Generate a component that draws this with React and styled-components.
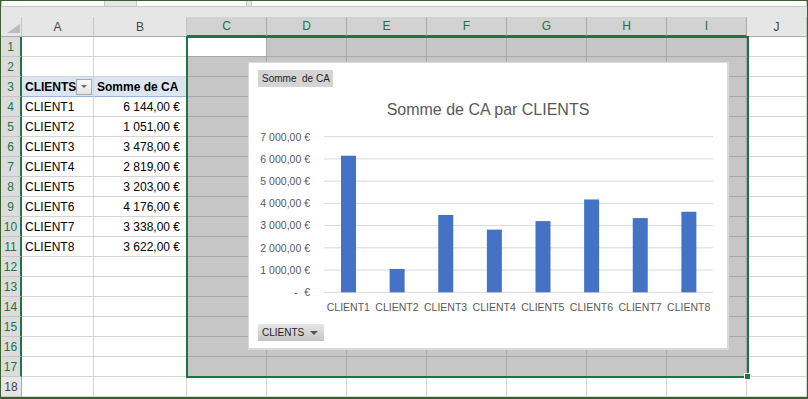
import React from 'react';
import styled, { createGlobalStyle, css } from 'styled-components';

const GREEN = '#217346';

const GlobalStyle = createGlobalStyle`
  html, body { margin: 0; padding: 0; background: #fff; overflow: hidden; }
  body { font-family: "Liberation Sans", Arial, sans-serif; }
`;

const Window = styled.div`
  width: 808px;
  height: 399px;
  box-sizing: border-box;
  border: 1px solid #3d5e2f;
  border-bottom-width: 2px;
  display: flex;
  flex-direction: column;
  overflow: hidden;
  background: #fff;
`;

const FormulaStrip = styled.div`
  display: flex;
  flex-shrink: 0;
  height: 6px;
  box-sizing: border-box;
  border-bottom: 1px solid #c6c6c6;
  background: #e6e6e6;
`;

const FormulaBox = styled.div`
  background: #fff;
  border-right: 1px solid #c6c6c6;
  border-left: 1px solid #c6c6c6;
  ${p => (p.$w ? css`width: ${p.$w}px;` : css`flex: 1;`)}
`;

const FormulaGap = styled.div`
  width: ${p => p.$w}px;
`;

const Band = styled.div`
  flex-shrink: 0;
  height: 10px;
  background: #e6e6e6;
`;

const Sheet = styled.div`
  position: relative;
  display: grid;
  grid-template-columns: 21px 72px 93px repeat(7, 80px) 1fr;
  grid-template-rows: repeat(19, 20px);
  font-size: 12px;
  color: #000;
`;

const Corner = styled.div`
  background: #e6e6e6;
  border-right: 1px solid #c6c6c6;
  border-bottom: 1px solid #ababab;
  box-sizing: border-box;
  display: flex;
  align-items: flex-end;
  justify-content: flex-end;
  padding: 0 1px 3px 0;
`;

const CornerTriangle = styled.div`
  width: 0;
  height: 0;
  border-left: 13px solid transparent;
  border-bottom: 9px solid #bcbcbc;
`;

const ColHead = styled.div`
  box-sizing: border-box;
  display: flex;
  align-items: center;
  justify-content: center;
  font-size: 12px;
  background: ${p => (p.$sel ? '#d2d2d2' : '#e6e6e6')};
  color: ${p => (p.$sel ? GREEN : '#444')};
  border-right: 1px solid ${p => (p.$sel ? '#ababab' : '#c6c6c6')};
  border-bottom: ${p => (p.$sel ? `2px solid ${GREEN}` : '1px solid #ababab')};
`;

const RowHead = styled.div`
  box-sizing: border-box;
  display: flex;
  align-items: center;
  justify-content: center;
  font-size: 12px;
  background: ${p => (p.$sel ? '#dcdcdc' : '#e6e6e6')};
  color: ${p => (p.$sel ? GREEN : '#444')};
  border-bottom: 1px solid #c6c6c6;
  border-right: ${p => (p.$sel ? `2px solid ${GREEN}` : '1px solid #ababab')};
`;

const Cell = styled.div`
  box-sizing: border-box;
  display: flex;
  align-items: center;
  justify-content: ${p => (p.$right ? 'flex-end' : 'flex-start')};
  padding: 0 ${p => (p.$right ? '6px' : '3px')} 0 3px;
  white-space: nowrap;
  overflow: hidden;
  background: #fff;
  border-right: 1px solid #d4d4d4;
  border-bottom: 1px solid #d4d4d4;
  ${p => p.$sel && css`
    background: #c6c6c6;
    border-color: #a8a8a8;
  `}
  ${p => p.$active && css`
    background: #fff;
  `}
  ${p => p.$pivot && css`
    background: #dce6f1;
    font-weight: bold;
    border-bottom-color: #9bb7dd;
    padding-right: 1px;
  `}
`;

const FilterButton = styled.div`
  margin-left: auto;
  width: 16px;
  height: 16px;
  box-sizing: border-box;
  border: 1px solid #ababab;
  background: linear-gradient(#fafafa, #e4e4e4);
  display: flex;
  align-items: center;
  justify-content: center;
  &::after {
    content: '';
    border-left: 3px solid transparent;
    border-right: 3px solid transparent;
    border-top: 3px solid #666;
  }
`;

const SelectionBox = styled.div`
  position: absolute;
  left: 185px;
  top: 19px;
  width: 563px;
  height: 342px;
  box-sizing: border-box;
  border: 2px solid ${GREEN};
  pointer-events: none;
`;

const FillHandle = styled.div`
  position: absolute;
  right: -4px;
  bottom: -4px;
  width: 7px;
  height: 7px;
  box-sizing: border-box;
  background: ${GREEN};
  border: 1px solid #fff;
`;

const ChartBox = styled.div`
  position: absolute;
  left: 247px;
  top: 45px;
  width: 481px;
  height: 288px;
  box-sizing: border-box;
  background: #fff;
  border: 1px solid #d9d9d9;
  border-right-width: 2px;
  border-bottom-width: 2px;
  display: flex;
  flex-direction: column;
  align-items: flex-start;
`;

const FieldButton = styled.div`
  margin: ${p => p.$top}px 0 0 9px;
  height: 17px;
  box-sizing: border-box;
  padding: 0 3px 0 4px;
  display: flex;
  align-items: center;
  gap: 5px;
  font-size: 10px;
  color: #1e1e1e;
  background: ${p => (p.$grad ? 'linear-gradient(#e6e6e6, #c4c4c4)' : '#d4d4d4')};
  white-space: pre;
`;

const DropArrow = styled.span`
  width: 0;
  height: 0;
  margin: 0 3px 0 1px;
  border-left: 4px solid transparent;
  border-right: 4px solid transparent;
  border-top: 4px solid #555;
`;

const ChartTitle = styled.div`
  align-self: stretch;
  margin-top: 13px;
  text-align: center;
  font-size: 16px;
  line-height: 20px;
  color: #595959;
`;

const Plot = styled.svg`
  display: block;
  margin-top: 2px;
  font-family: "Liberation Sans", Arial, sans-serif;
`;

const clients = [
  ['CLIENT1', 6144, '6 144,00 €'],
  ['CLIENT2', 1051, '1 051,00 €'],
  ['CLIENT3', 3478, '3 478,00 €'],
  ['CLIENT4', 2819, '2 819,00 €'],
  ['CLIENT5', 3203, '3 203,00 €'],
  ['CLIENT6', 4176, '4 176,00 €'],
  ['CLIENT7', 3338, '3 338,00 €'],
  ['CLIENT8', 3622, '3 622,00 €'],
];

const COLS = ['A', 'B', 'C', 'D', 'E', 'F', 'G', 'H', 'I', 'J'];

function cellContent(row, col) {
  if (row === 3 && col === 0) return { text: 'CLIENTS', pivot: true, filter: true };
  if (row === 3 && col === 1) return { text: 'Somme de CA', pivot: true };
  if (row >= 4 && row <= 11) {
    const c = clients[row - 4];
    if (col === 0) return { text: c[0] };
    if (col === 1) return { text: c[2], right: true };
  }
  return {};
}

function Chart() {
  const left = 75;
  const right = 464;
  const top = 14.7;
  const bottom = 170.3;
  const step = (bottom - top) / 7;
  const cat = (right - left) / clients.length;
  const ticks = [7, 6, 5, 4, 3, 2, 1, 0];

  return (
    <ChartBox>
      <FieldButton $top={7}>Somme  de CA</FieldButton>
      <ChartTitle>Somme de CA par CLIENTS</ChartTitle>
      <Plot width="479" height="195" viewBox="0 0 479 195">
        {ticks.map((t, i) => {
          const y = top + i * step;
          return (
            <g key={t}>
              <line x1={left} x2={right} y1={y} y2={y} stroke="#d9d9d9" strokeWidth="1" />
              {t > 0 ? (
                <text x="61" y={y + 3.8} textAnchor="end" fontSize="10.5" fill="#595959">
                  {`${t} 000,00 €`}
                </text>
              ) : (
                <>
                  <text x="45" y={y + 3.8} fontSize="10.5" fill="#595959">-</text>
                  <text x="61" y={y + 3.8} textAnchor="end" fontSize="10.5" fill="#595959">€</text>
                </>
              )}
            </g>
          );
        })}
        {clients.map(([name, v], i) => {
          const x0 = left + i * cat;
          const h = (v / 7000) * (bottom - top);
          return (
            <g key={name}>
              <rect x={x0 + 17} y={bottom - h} width="15" height={h} fill="#4472c4" />
              <text x={x0 + cat / 2} y="189" textAnchor="middle" fontSize="10.5" fill="#595959">
                {name}
              </text>
            </g>
          );
        })}
      </Plot>
      <FieldButton $top={7} $grad>
        CLIENTS
        <DropArrow />
      </FieldButton>
    </ChartBox>
  );
}

export default function App() {
  const rows = Array.from({ length: 18 }, (_, i) => i + 1);
  return (
    <>
      <GlobalStyle />
      <Window>
        <FormulaStrip>
          <FormulaBox $w={102} />
          <FormulaGap $w={31} />
          <FormulaBox $w={109} />
          <FormulaGap $w={4} />
          <FormulaBox />
        </FormulaStrip>
        <Band />
        <Sheet>
          <Corner>
            <CornerTriangle />
          </Corner>
          {COLS.map((c, i) => (
            <ColHead key={c} $sel={i >= 2 && i <= 8}>{c}</ColHead>
          ))}
          {rows.map(r => (
            <React.Fragment key={r}>
              <RowHead $sel={r <= 17}>{r}</RowHead>
              {COLS.map((c, ci) => {
                const content = cellContent(r, ci);
                const sel = r <= 17 && ci >= 2 && ci <= 8;
                return (
                  <Cell
                    key={c}
                    $sel={sel}
                    $active={r === 1 && ci === 2}
                    $pivot={content.pivot}
                    $right={content.right}
                  >
                    {content.text}
                    {content.filter && <FilterButton />}
                  </Cell>
                );
              })}
            </React.Fragment>
          ))}
          <Chart />
          <SelectionBox>
            <FillHandle />
          </SelectionBox>
        </Sheet>
      </Window>
    </>
  );
}
